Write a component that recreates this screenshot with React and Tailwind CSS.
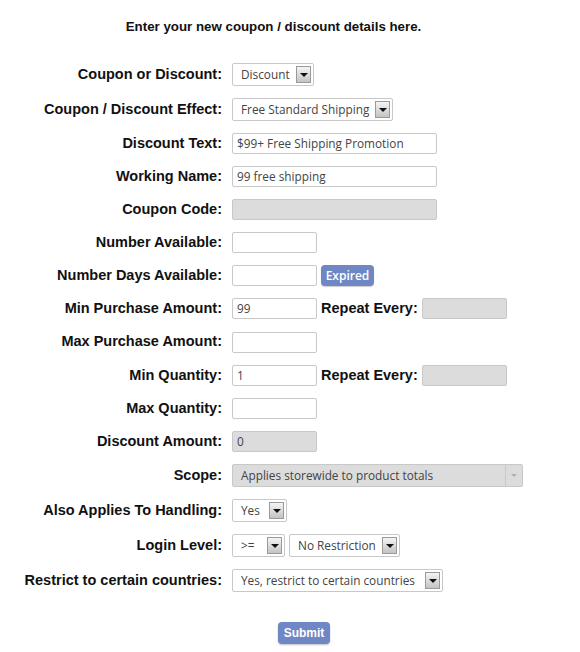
import React from 'react';

const labelFont = { fontFamily: '"Liberation Sans", Arial, sans-serif' };
const ctrlFont = { fontFamily: '"Open Sans", "Noto Sans", sans-serif' };

const Arrow = ({ disabled }) =>
  disabled ? (
    <div className="absolute right-0 top-0 bottom-0 w-[17px] border-l border-[#c8c8c8] flex items-center justify-center">
      <div className="w-0 h-0 border-l-[3px] border-r-[3px] border-t-[3px] border-l-transparent border-r-transparent border-t-[#b0b0b0]" />
    </div>
  ) : (
    <div className="absolute right-[2px] top-[2px] bottom-[2px] w-[15px] border border-[#9a9a9a] bg-gradient-to-b from-[#f4f4f4] to-[#c4c4c4] flex items-center justify-center">
      <div className="w-0 h-0 border-l-[4px] border-r-[4px] border-t-[4px] border-l-transparent border-r-transparent border-t-[#111]" />
    </div>
  );

const Select = ({ width, value, disabled }) => (
  <div
    className={`relative h-[23px] border border-[#c8c8c8] rounded-[2px] flex items-center pl-[8px] text-[11.8px] text-[#444] ${disabled ? 'bg-[#dcdcdc]' : 'bg-white'}`}
    style={{ width, ...ctrlFont }}
  >
    <span className="whitespace-nowrap">{value}</span>
    <Arrow disabled={disabled} />
  </div>
);

const Input = ({ width, value, disabled }) => (
  <div
    className={`h-[21px] border border-[#c8c8c8] rounded-[2px] flex items-center pl-[4px] text-[11.8px] text-[#444] ${disabled ? 'bg-[#dcdcdc]' : 'bg-white'}`}
    style={{ width, ...ctrlFont }}
  >
    <span className="whitespace-nowrap">{value}</span>
  </div>
);

const Row = ({ label, h, children }) => (
  <div className="flex items-center" style={{ height: h }}>
    <div className="w-[222px] shrink-0 text-right text-[14.5px] font-bold text-[#111] whitespace-nowrap" style={labelFont}>
      {label}
    </div>
    <div className="ml-[10px] flex items-center gap-[4px]">{children}</div>
  </div>
);

const RepeatEvery = () => (
  <>
    <span className="text-[14.5px] font-bold text-[#111] whitespace-nowrap" style={labelFont}>Repeat Every:</span>
    <Input width={85} disabled />
  </>
);

const App = () => {
  return (
    <div className="min-h-screen bg-white" style={labelFont}>
      <div className="w-[547px] pt-[18px] text-center text-[13.3px] font-bold leading-[18px] text-[#111]">
        Enter your new coupon / discount details here.
      </div>

      <div className="mt-[21px] flex flex-col">
        <Row label="Coupon or Discount:" h={35}>
          <Select width={82} value="Discount" />
        </Row>
        <Row label="Coupon / Discount Effect:" h={35}>
          <Select width={161} value="Free Standard Shipping" />
        </Row>
        <Row label="Discount Text:" h={33}>
          <Input width={205} value="$99+ Free Shipping Promotion" />
        </Row>
        <Row label="Working Name:" h={33}>
          <Input width={205} value="99 free shipping" />
        </Row>
        <Row label="Coupon Code:" h={33}>
          <Input width={205} disabled />
        </Row>
        <Row label="Number Available:" h={33}>
          <Input width={85} />
        </Row>
        <Row label="Number Days Available:" h={33}>
          <Input width={85} />
          <button
            className="h-[21px] w-[53px] rounded-[4px] bg-[#6f87c5] text-white text-[12px] font-semibold shadow-[0_1px_1px_rgba(0,0,0,0.2)]"
            style={ctrlFont}
          >
            Expired
          </button>
        </Row>
        <Row label="Min Purchase Amount:" h={33}>
          <Input width={85} value="99" />
          <RepeatEvery />
        </Row>
        <Row label="Max Purchase Amount:" h={34}>
          <Input width={85} />
        </Row>
        <Row label="Min Quantity:" h={33}>
          <Input width={85} value="1" />
          <RepeatEvery />
        </Row>
        <Row label="Max Quantity:" h={33}>
          <Input width={85} />
        </Row>
        <Row label="Discount Amount:" h={33}>
          <Input width={85} value="0" disabled />
        </Row>
        <Row label="Scope:" h={35}>
          <Select width={291} value="Applies storewide to product totals" disabled />
        </Row>
        <Row label="Also Applies To Handling:" h={35}>
          <Select width={55} value="Yes" />
        </Row>
        <Row label="Login Level:" h={35}>
          <Select width={53} value=">=" />
          <Select width={111} value="No Restriction" />
        </Row>
        <Row label="Restrict to certain countries:" h={35}>
          <Select width={211} value="Yes, restrict to certain countries" />
        </Row>

        <div className="mt-[22px] pl-[278px]">
          <button className="h-[22px] w-[52px] rounded-[4px] bg-[#6f87c5] text-white text-[12px] font-bold shadow-[0_1px_2px_rgba(0,0,0,0.25)]">
            Submit
          </button>
        </div>
      </div>
    </div>
  );
};

export default App;
